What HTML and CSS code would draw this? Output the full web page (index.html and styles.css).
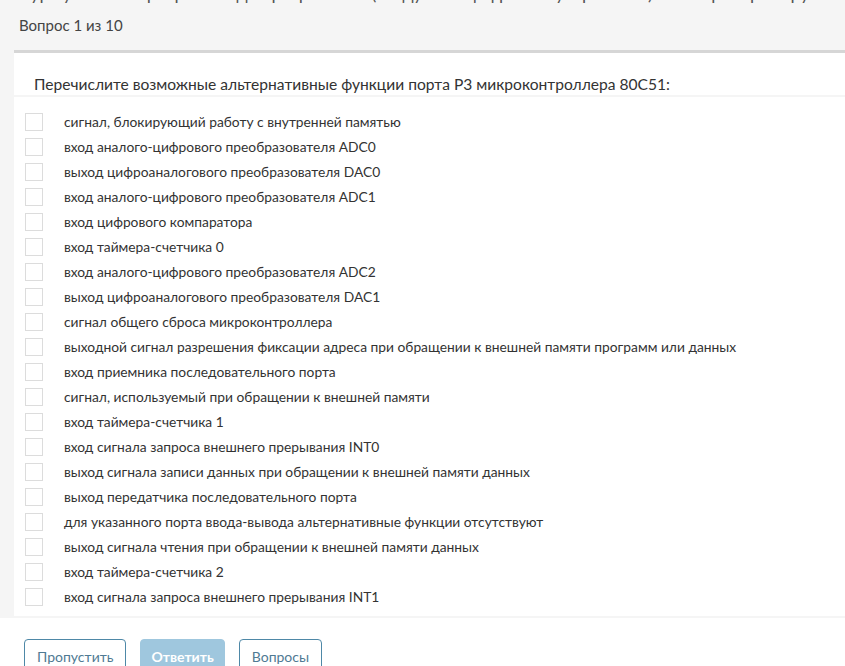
FILE: index.html
```html
<!DOCTYPE html>
<html lang="ru">
<head>
<meta charset="utf-8">
<title>Вопрос 1 из 10</title>
<link rel="stylesheet" href="styles.css">
</head>
<body>
<div class="top">
  <div class="course-title">Курс учебной программы для разработки (Модуль 3: цифровые устройства) Самопроверка группы</div>
  <div class="counter">Вопрос 1 из 10</div>
</div>
<div class="panel">
  <div class="q-head">Перечислите возможные альтернативные функции порта P3 микроконтроллера 80C51:</div>
  <ul class="options">
    <li class="option"><span class="box"></span><span class="label">сигнал, блокирующий работу с внутренней памятью</span></li>
    <li class="option"><span class="box"></span><span class="label">вход аналого-цифрового преобразователя ADC0</span></li>
    <li class="option"><span class="box"></span><span class="label">выход цифроаналогового преобразователя DAC0</span></li>
    <li class="option"><span class="box"></span><span class="label">вход аналого-цифрового преобразователя ADC1</span></li>
    <li class="option"><span class="box"></span><span class="label">вход цифрового компаратора</span></li>
    <li class="option"><span class="box"></span><span class="label">вход таймера-счетчика 0</span></li>
    <li class="option"><span class="box"></span><span class="label">вход аналого-цифрового преобразователя ADC2</span></li>
    <li class="option"><span class="box"></span><span class="label">выход цифроаналогового преобразователя DAC1</span></li>
    <li class="option"><span class="box"></span><span class="label">сигнал общего сброса микроконтроллера</span></li>
    <li class="option"><span class="box"></span><span class="label">выходной сигнал разрешения фиксации адреса при обращении к внешней памяти программ или данных</span></li>
    <li class="option"><span class="box"></span><span class="label">вход приемника последовательного порта</span></li>
    <li class="option"><span class="box"></span><span class="label">сигнал, используемый при обращении к внешней памяти</span></li>
    <li class="option"><span class="box"></span><span class="label">вход таймера-счетчика 1</span></li>
    <li class="option"><span class="box"></span><span class="label">вход сигнала запроса внешнего прерывания INT0</span></li>
    <li class="option"><span class="box"></span><span class="label">выход сигнала записи данных при обращении к внешней памяти данных</span></li>
    <li class="option"><span class="box"></span><span class="label">выход передатчика последовательного порта</span></li>
    <li class="option"><span class="box"></span><span class="label">для указанного порта ввода-вывода альтернативные функции отсутствуют</span></li>
    <li class="option"><span class="box"></span><span class="label">выход сигнала чтения при обращении к внешней памяти данных</span></li>
    <li class="option"><span class="box"></span><span class="label">вход таймера-счетчика 2</span></li>
    <li class="option"><span class="box"></span><span class="label">вход сигнала запроса внешнего прерывания INT1</span></li>
  </ul>
</div>
<div class="footer">
  <button class="btn btn-outline">Пропустить</button>
  <button class="btn btn-filled">Ответить</button>
  <button class="btn btn-outline">Вопросы</button>
</div>
</body>
</html>
```
FILE: styles.css
```css
html, body {
  margin: 0;
  padding: 0;
}
body {
  background: #f5f5f5;
  font-family: "Lato", "Liberation Sans", sans-serif;
  color: #333;
  overflow: hidden;
}
.top {
  padding: 0 0 0 19px;
  height: 50px;
  overflow: hidden;
}
.course-title {
  font-size: 18px;
  line-height: 22px;
  margin-top: -18px;
  color: #555;
  white-space: nowrap;
}
.counter {
  font-size: 15px;
  line-height: 20px;
  margin-top: 11px;
  color: #444;
}
.panel {
  margin-left: 14px;
  background: #fff;
  border-top: 3px solid #d6d6d6;
  border-bottom: 2px solid #f5f5f5;
}
.q-head {
  font-size: 15.6px;
  line-height: 20px;
  padding: 21px 20px 0;
  height: 21px;
  color: #333;
  border-bottom: 2px solid #f5f5f5;
}
.options {
  list-style: none;
  margin: 0;
  padding: 12px 0 7px 11px;
}
.option {
  display: flex;
  align-items: center;
  height: 25px;
}
.box {
  width: 16px;
  height: 16px;
  border: 1px solid #dcdcdc;
  background: #fff;
  flex: none;
}
.label {
  margin-left: 21px;
  font-size: 13.8px;
  color: #333;
}
.footer {
  background: #fff;
  display: flex;
  gap: 14px;
  padding: 21px 0 0 24px;
  height: 60px;
}
.btn {
  font-family: inherit;
  font-size: 14px;
  height: 34px;
  padding: 0 12px;
  border-radius: 4px;
  cursor: pointer;
}
.btn-outline {
  background: #fff;
  border: 1px solid #4e88a7;
  color: #4f7a93;
}
.btn-filled {
  background: #9fc7de;
  border: 1px solid #9fc7de;
  color: #fff;
  font-weight: bold;
  padding: 0 10px;
}
```
